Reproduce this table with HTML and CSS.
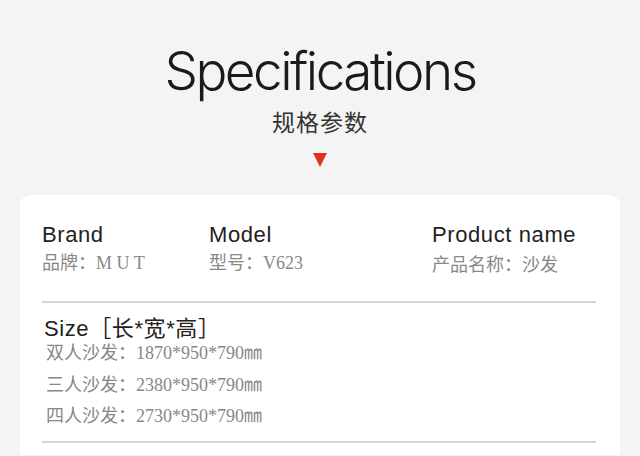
FILE: index.html
```html
<!DOCTYPE html>
<html lang="zh">
<head>
<meta charset="utf-8">
<link rel="stylesheet" href="styles.css">
</head>
<body>
<header class="head">
  <h1 class="title">Specifications</h1>
  <p class="subtitle">规格参数</p>
  <span class="arrow"></span>
</header>
<section class="card">
  <div class="row">
    <div class="cell">
      <div class="label">Brand</div>
      <div class="value serif">品牌：M U T</div>
    </div>
    <div class="cell">
      <div class="label">Model</div>
      <div class="value serif">型号：V623</div>
    </div>
    <div class="cell">
      <div class="label">Product name</div>
      <div class="value">产品名称：沙发</div>
    </div>
  </div>
  <div class="sizes">
    <div class="label">Size［长*宽*高］</div>
    <div class="size-line">双人沙发：1870*950*790㎜</div>
    <div class="size-line">三人沙发：2380*950*790㎜</div>
    <div class="size-line">四人沙发：2730*950*790㎜</div>
  </div>
</section>
</body>
</html>
```

FILE: styles.css
```css
html, body {
  margin: 0;
  padding: 0;
  background: #f4f4f4;
  height: 456px;
  overflow: hidden;
}
body {
  font-family: "Liberation Sans", "Noto Sans CJK SC", sans-serif;
  color: #222;
}
.head {
  display: flex;
  flex-direction: column;
  align-items: center;
  padding-top: 38px;
}
.title {
  margin: 0;
  font-family: "Inter", "Liberation Sans", sans-serif;
  font-weight: 300;
  font-size: 53px;
  line-height: 66px;
  letter-spacing: -2.5px;
  color: #1a1a1a;
}
.subtitle {
  margin: 0;
  font-family: "Noto Sans CJK SC", sans-serif;
  font-size: 23px;
  line-height: 34px;
  color: #333;
  letter-spacing: 1px;
}
.arrow {
  margin-top: 15px;
  width: 0;
  height: 0;
  border-left: 7.5px solid transparent;
  border-right: 7.5px solid transparent;
  border-top: 14px solid #e0301e;
}
.card {
  margin: 28px 20px 0;
  background: #fff;
  border-radius: 10px 10px 0 0;
  padding: 27px 24px 0 22px;
  height: 233px;
  overflow: hidden;
}
.row {
  display: grid;
  grid-template-columns: 167px 223px 1fr;
  padding-bottom: 26px;
  border-bottom: 2px solid #d4d4d4;
}
.label {
  font-size: 22px;
  line-height: 26px;
  letter-spacing: 0.6px;
  color: #222;
}
.value {
  margin-top: 3px;
  font-size: 18px;
  line-height: 24px;
  color: #888;
  font-family: "Noto Sans CJK SC", sans-serif;
}
.value.serif {
  font-family: "Liberation Serif", "Noto Sans CJK SC", serif;
}
.sizes {
  padding: 13px 0 8px 2px;
  border-bottom: 2px solid #d4d4d4;
}
.sizes .label {
  margin-bottom: -4px;
}
.size-line {
  padding-left: 2px;
  font-family: "Liberation Serif", "Noto Sans CJK SC", serif;
  font-size: 18px;
  line-height: 31.5px;
  color: #888;
}
```
